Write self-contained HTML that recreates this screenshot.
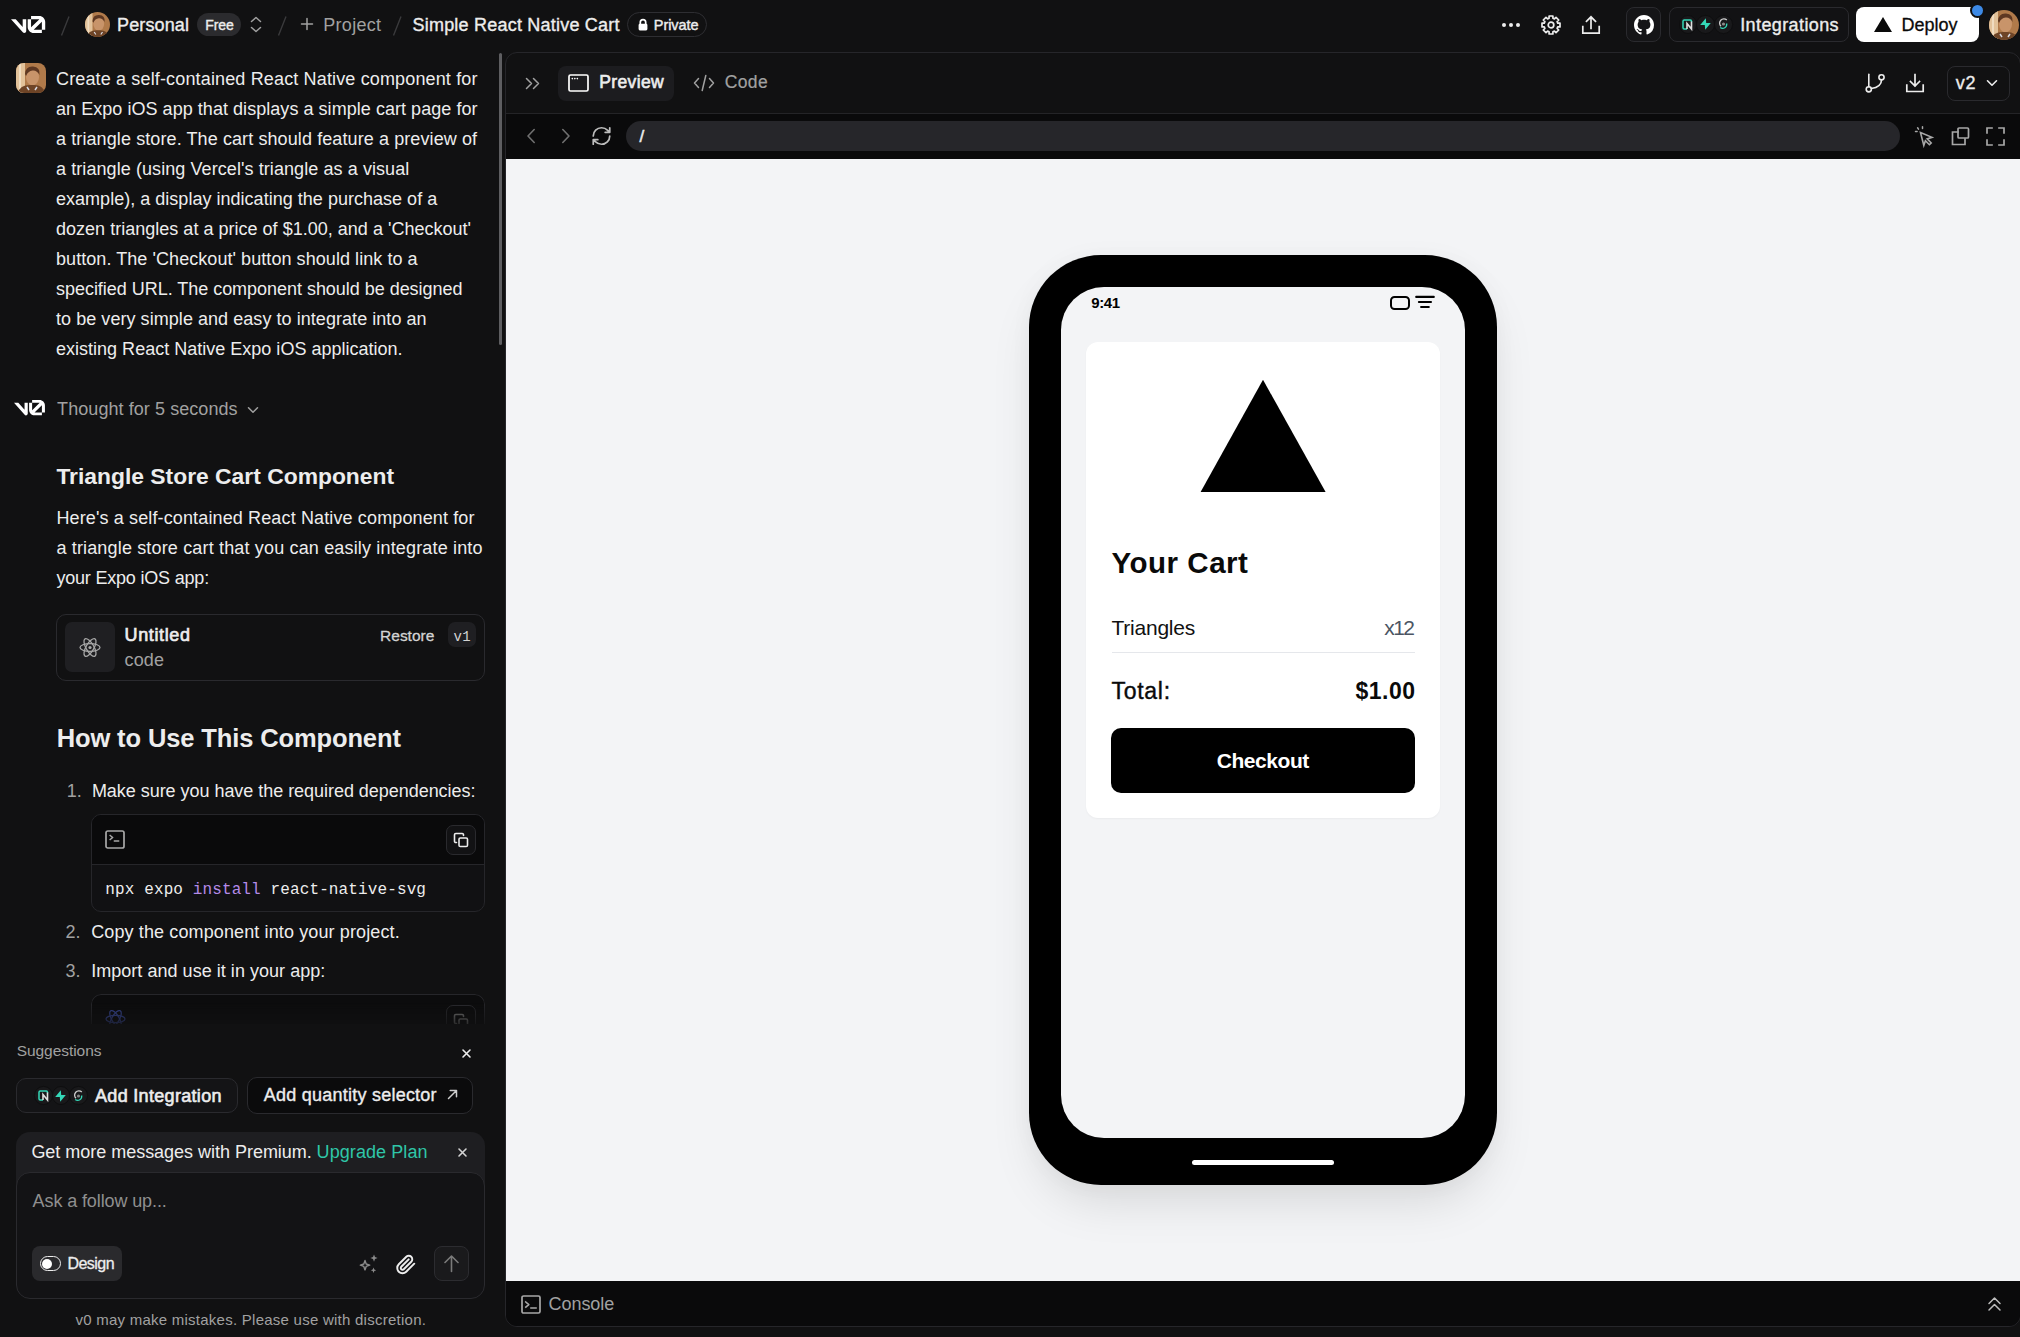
<!DOCTYPE html>
<html><head><meta charset="utf-8">
<style>
*{box-sizing:border-box;margin:0;padding:0}
html,body{width:2020px;height:1337px;overflow:hidden;background:#111112;font-family:"Liberation Sans",sans-serif;color:#ededed}
.a{position:absolute}
.t{position:absolute;white-space:pre;line-height:1;font-family:"Liberation Sans",sans-serif}
.t.m{font-family:"Liberation Mono",monospace}
svg{position:absolute;display:block;overflow:visible}
.ic{fill:none;stroke:currentColor;stroke-linecap:round;stroke-linejoin:round}
</style></head>
<body>
<!-- ============ TOP BAR ============ -->
<svg style="left:10.5px;top:16px;width:34.3px;height:17.15px" viewBox="0 0 40 20" fill="#fff"><path d="M23.3919 0H32.9188C36.7819 0 39.9136 3.13165 39.9136 6.99475V16.0805H36.0006V6.99475C36.0006 6.90167 35.9969 6.80925 35.9898 6.71766L26.4628 16.079C26.4949 16.08 26.5272 16.0805 26.5595 16.0805H36.0006V19.7762H26.5595C22.6964 19.7762 19.4788 16.6139 19.4788 12.7508V3.68923H23.3919V12.7508C23.3919 12.9253 23.4054 13.0977 23.4316 13.2668L33.1682 3.6995C33.0861 3.6927 33.003 3.68923 32.9188 3.68923H23.3919V0Z"/><path d="M13.7688 19.0956L0 3.68759H5.53933L13.6231 12.7337V3.68759H17.7535V17.5746C17.7535 19.6705 15.1654 20.6584 13.7688 19.0956Z"/></svg>
<svg style="left:0;top:0;width:10px;height:10px"><path d="M69 16.5L61.5 35.5M286 16.5L278.5 35.5M401 16.5L393.5 35.5" stroke="#3a3a3c" stroke-width="1.4"/></svg>
<div class="a" style="left:85px;top:12px;width:25px;height:25px;border-radius:50%;overflow:hidden"><svg viewBox="0 0 30 30" style="position:absolute;left:0;top:0;width:100%;height:100%" preserveAspectRatio="none"><rect width="30" height="30" fill="#b07a4a"/><rect x="0" y="0" width="9" height="30" fill="#e2c29a"/><rect x="3" y="0" width="2" height="30" fill="#f0dcc0"/><ellipse cx="16.5" cy="14" rx="6.5" ry="8.5" fill="#c8946a"/><path d="M9 11Q9.5 3 17 3.5Q24.5 4 23.5 12Q21 7 16.5 7.5Q12 8 10 13z" fill="#5e3822"/><path d="M2 30Q4 21 16 22Q27 21 29 30z" fill="#6e4426"/><path d="M11 24l2 3M21 24l-2 3" stroke="#d8d8e0" stroke-width="1.5"/></svg></div>
<div class="a" style="left:197px;top:13px;width:44px;height:23px;border-radius:12px;background:#2b2b2e"></div>
<svg class="ic" style="left:250px;top:16px;width:12px;height:17px;color:#a1a1a1" viewBox="0 0 12 17"><path d="M1.5 5.5L6 1.5l4.5 4M1.5 11.5L6 15.5l4.5-4" stroke-width="1.5"/></svg>
<svg class="ic" style="left:301px;top:18.3px;width:12px;height:12px;color:#a1a1a1" viewBox="0 0 12 12"><path d="M6 0.5v11M0.5 6h11" stroke-width="1.5"/></svg>
<div class="a" style="left:627px;top:12px;width:80px;height:25px;border-radius:13px;border:1px solid #2e2e32"></div>
<svg style="left:638px;top:19px;width:10px;height:11.5px" viewBox="0 0 10 11.5"><path d="M2.3 5V3.3a2.7 2.7 0 0 1 5.4 0V5" fill="none" stroke="#fff" stroke-width="1.7"/><rect x="0.6" y="4.8" width="8.8" height="6.6" rx="1.3" fill="#fff"/></svg>
<svg style="left:1500px;top:23px;width:22px;height:4px" viewBox="0 0 22 4" fill="#ededed"><circle cx="4" cy="2" r="2"/><circle cx="11" cy="2" r="2"/><circle cx="18" cy="2" r="2"/></svg>
<svg class="ic" style="left:1541px;top:15px;width:20px;height:20px;color:#ededed" viewBox="0 0 20 20"><path stroke-width="1.7" d="M8.07 3.27 L8.09 1.00 L11.91 1.00 L11.93 3.27 L13.39 3.88 L15.01 2.28 L17.72 4.99 L16.12 6.61 L16.73 8.07 L19.00 8.09 L19.00 11.91 L16.73 11.93 L16.12 13.39 L17.72 15.01 L15.01 17.72 L13.39 16.12 L11.93 16.73 L11.91 19.00 L8.09 19.00 L8.07 16.73 L6.61 16.12 L4.99 17.72 L2.28 15.01 L3.88 13.39 L3.27 11.93 L1.00 11.91 L1.00 8.09 L3.27 8.07 L3.88 6.61 L2.28 4.99 L4.99 2.28 L6.61 3.88Z"/><circle cx="10" cy="10" r="2.8" stroke-width="1.7"/></svg>
<svg class="ic" style="left:1581px;top:15px;width:20px;height:20px;color:#ededed" viewBox="0 0 20 20"><path stroke-width="1.7" d="M10 2v11.5M5.5 6.3L10 1.8l4.5 4.5M1.8 11.5v6.7h16.4v-6.7" stroke-linecap="square" stroke-linejoin="miter"/></svg>
<div class="a" style="left:1626px;top:7px;width:35px;height:35px;border-radius:8px;border:1px solid #2a2a2e;background:#151517"></div>
<svg style="left:1634px;top:15px;width:20px;height:20px" viewBox="0 0 16 16" fill="#fff"><path d="M8 0C3.58 0 0 3.58 0 8c0 3.54 2.29 6.530 5.47 7.59.4.07.55-.17.55-.38 0-.19-.01-.82-.01-1.49-2.01.37-2.530-.49-2.69-.94-.09-.23-.48-.94-.82-1.13-.28-.15-.68-.52-.01-.53.63-.01 1.08.58 1.23.82.72 1.21 1.87.87 2.33.66.07-.52.28-.87.51-1.07-1.78-.2-3.64-.89-3.640-3.95 0-.87.31-1.59.82-2.15-.08-.2-.36-1.02.08-2.12 0 0 .67-.21 2.2.82.64-.18 1.32-.27 2-.27.68 0 1.36.09 2 .27 1.53-1.04 2.2-.82 2.2-.82.44 1.1.16 1.92.08 2.12.51.56.82 1.27.82 2.15 0 3.07-1.87 3.75-3.65 3.95.29.25.54.73.54 1.48 0 1.07-.01 1.93-.01 2.2 0 .21.15.46.55.38A8.013 8.013 0 0016 8c0-4.42-3.58-8-8-8z"/></svg>
<div class="a" style="left:1669px;top:7px;width:180px;height:35px;border-radius:8px;border:1px solid #2a2a2e;background:#121214"></div>
<div class="a" style="left:1678.55px;top:15.05px;width:18.5px;height:18.5px;border-radius:50%;background:#19191b;border:1px solid #0e0e0f"></div><div class="a" style="left:1696.35px;top:15.05px;width:18.5px;height:18.5px;border-radius:50%;background:#19191b;border:1px solid #0e0e0f"></div><div class="a" style="left:1714.15px;top:15.05px;width:18.5px;height:18.5px;border-radius:50%;background:#19191b;border:1px solid #0e0e0f"></div><svg style="left:1682.30px;top:18.80px;width:11.00px;height:11.00px" viewBox="0 0 11 11"><path d="M9.5 3V2.2A1.2 1.2 0 0 0 8.3 1H2.2A1.2 1.2 0 0 0 1 2.2v6.6A1.2 1.2 0 0 0 2.2 10H5" fill="none" stroke="#34d8b8" stroke-width="1.5"/><path d="M5 10V4.5l4.5 5.5V2.5" fill="none" stroke="#e0e0e0" stroke-width="1.6"/></svg><svg style="left:1700.10px;top:18.30px;width:11.00px;height:12.00px" viewBox="0 0 11 12"><path d="M5.8 0.3L0.2 7h4.6L5.2 11.7 10.8 5H6.2z" fill="#34d8b8"/></svg><svg style="left:1717.90px;top:18.30px;width:11.00px;height:12.00px" viewBox="0 0 11 12"><path d="M8.8 2A4.2 4.2 0 1 0 3 8.3" fill="none" stroke="#d0d0d0" stroke-width="1.3"/><path d="M2.2 9.5A4 4 0 0 0 8.6 5.5" fill="none" stroke="#34d8b8" stroke-width="1.3"/><circle cx="5.5" cy="6" r="1.6" fill="#888"/></svg>
<div class="a" style="left:1856px;top:7px;width:123px;height:35px;border-radius:8px;background:#fff"></div>
<svg style="left:1874px;top:17px;width:18px;height:15px" viewBox="0 0 18 15" fill="#0a0a0a"><path d="M9 0L18 15H0z"/></svg>
<div class="a" style="left:1970px;top:2.5px;width:15px;height:15px;border-radius:50%;background:#3d8ae6;border:2px solid #111112"></div>
<div class="a" style="left:1989px;top:10px;width:30px;height:30px;border-radius:50%;overflow:hidden"><svg viewBox="0 0 30 30" style="position:absolute;left:0;top:0;width:100%;height:100%" preserveAspectRatio="none"><rect width="30" height="30" fill="#b07a4a"/><rect x="0" y="0" width="9" height="30" fill="#e2c29a"/><rect x="3" y="0" width="2" height="30" fill="#f0dcc0"/><ellipse cx="16.5" cy="14" rx="6.5" ry="8.5" fill="#c8946a"/><path d="M9 11Q9.5 3 17 3.5Q24.5 4 23.5 12Q21 7 16.5 7.5Q12 8 10 13z" fill="#5e3822"/><path d="M2 30Q4 21 16 22Q27 21 29 30z" fill="#6e4426"/><path d="M11 24l2 3M21 24l-2 3" stroke="#d8d8e0" stroke-width="1.5"/></svg></div>

<!-- ============ LEFT ============ -->
<div class="a" style="left:16px;top:63px;width:30px;height:30px;border-radius:8px;overflow:hidden"><svg viewBox="0 0 30 30" style="position:absolute;left:0;top:0;width:100%;height:100%" preserveAspectRatio="none"><rect width="30" height="30" fill="#b07a4a"/><rect x="0" y="0" width="9" height="30" fill="#e2c29a"/><rect x="3" y="0" width="2" height="30" fill="#f0dcc0"/><ellipse cx="16.5" cy="14" rx="6.5" ry="8.5" fill="#c8946a"/><path d="M9 11Q9.5 3 17 3.5Q24.5 4 23.5 12Q21 7 16.5 7.5Q12 8 10 13z" fill="#5e3822"/><path d="M2 30Q4 21 16 22Q27 21 29 30z" fill="#6e4426"/><path d="M11 24l2 3M21 24l-2 3" stroke="#d8d8e0" stroke-width="1.5"/></svg></div>
<div class="a" style="left:499px;top:53px;width:3px;height:292px;border-radius:1.5px;background:#5e5e61"></div>
<svg style="left:14px;top:399.8px;width:31px;height:15.5px" viewBox="0 0 40 20" fill="#fff"><path d="M23.3919 0H32.9188C36.7819 0 39.9136 3.13165 39.9136 6.99475V16.0805H36.0006V6.99475C36.0006 6.90167 35.9969 6.80925 35.9898 6.71766L26.4628 16.079C26.4949 16.08 26.5272 16.0805 26.5595 16.0805H36.0006V19.7762H26.5595C22.6964 19.7762 19.4788 16.6139 19.4788 12.7508V3.68923H23.3919V12.7508C23.3919 12.9253 23.4054 13.0977 23.4316 13.2668L33.1682 3.6995C33.0861 3.6927 33.003 3.68923 32.9188 3.68923H23.3919V0Z"/><path d="M13.7688 19.0956L0 3.68759H5.53933L13.6231 12.7337V3.68759H17.7535V17.5746C17.7535 19.6705 15.1654 20.6584 13.7688 19.0956Z"/></svg>
<svg class="ic" style="left:247px;top:406px;width:12px;height:8px;color:#a1a1a1" viewBox="0 0 12 8"><path d="M1.5 1.8L6 6.2l4.5-4.4" stroke-width="1.5"/></svg>
<!-- artifact card -->
<div class="a" style="left:56px;top:614px;width:429px;height:67px;border-radius:10px;border:1px solid #2a2a2e"></div>
<div class="a" style="left:65px;top:622px;width:50px;height:50px;border-radius:7px;background:#1f1f22"></div>
<svg class="ic" style="left:79px;top:637px;width:22px;height:21px;color:#a8a8a8" viewBox="0 0 22 21"><ellipse cx="11" cy="10.5" rx="10" ry="3.9" stroke-width="1.3"/><ellipse cx="11" cy="10.5" rx="10" ry="3.9" stroke-width="1.3" transform="rotate(60 11 10.5)"/><ellipse cx="11" cy="10.5" rx="10" ry="3.9" stroke-width="1.3" transform="rotate(120 11 10.5)"/><circle cx="11" cy="10.5" r="1.6" fill="#a8a8a8" stroke="none"/></svg>
<div class="a" style="left:448px;top:622px;width:28px;height:25px;border-radius:7px;background:#1f1f22"></div>
<!-- code block 1 -->
<div class="a" style="left:91px;top:814px;width:394px;height:98px;border-radius:10px;border:1px solid #26262a;background:#111113;overflow:hidden"><div class="a" style="left:0;top:0;width:100%;height:50px;background:#0a0a0b;border-bottom:1px solid #26262a"></div></div>
<svg class="ic" style="left:105px;top:830px;width:20px;height:19px;color:#a8a8a8" viewBox="0 0 20 19"><rect x="1" y="1" width="18" height="17" rx="1.8" stroke-width="1.7"/><path d="M5.2 5.5l2.5 2-2.5 2M9.5 11h4" stroke-width="1.5" stroke-linecap="square"/></svg>
<div class="a" style="left:446px;top:825px;width:30px;height:30px;border-radius:7px;border:1px solid #2a2a2e;background:#121214"></div>
<svg class="ic" style="left:453px;top:832px;width:16px;height:16px;color:#ededed" viewBox="0 0 16 16"><path d="M3.5 10.5H2.8A1.3 1.3 0 0 1 1.5 9.2V2.8A1.3 1.3 0 0 1 2.8 1.5h6.4a1.3 1.3 0 0 1 1.3 1.3v.7" stroke-width="1.6"/><rect x="6" y="6" width="8.5" height="8.5" rx="1.3" stroke-width="1.6"/></svg>
<!-- list numbers / texts via texts -->
<!-- code block 2 (faded) -->
<div class="a" style="left:91px;top:994px;width:394px;height:40px;border-radius:10px 10px 0 0;border:1px solid #26262a;border-bottom:none;background:#0c0c0d;overflow:hidden;-webkit-mask-image:linear-gradient(#000 20%,rgba(0,0,0,0.2) 80%,transparent)">
  <svg class="ic" style="left:13px;top:14px;width:21px;height:20px;color:#3a4a9a" viewBox="0 0 22 21"><ellipse cx="11" cy="10.5" rx="10" ry="3.9" stroke-width="1.3"/><ellipse cx="11" cy="10.5" rx="10" ry="3.9" stroke-width="1.3" transform="rotate(60 11 10.5)"/><ellipse cx="11" cy="10.5" rx="10" ry="3.9" stroke-width="1.3" transform="rotate(120 11 10.5)"/></svg>
  <div class="a" style="left:354px;top:10px;width:30px;height:30px;border-radius:7px;border:1px solid #2a2a2e"></div><svg class="ic" style="left:361px;top:18px;width:16px;height:16px;color:#777" viewBox="0 0 16 16"><path d="M3.5 10.5H2.8A1.3 1.3 0 0 1 1.5 9.2V2.8A1.3 1.3 0 0 1 2.8 1.5h6.4a1.3 1.3 0 0 1 1.3 1.3v.7" stroke-width="1.6"/><rect x="6" y="6" width="8.5" height="8.5" rx="1.3" stroke-width="1.6"/></svg>
</div>
<div class="a" style="left:0;top:1024px;width:498px;height:12px;background:#111112"></div>
<!-- suggestions -->
<svg class="ic" style="left:462px;top:1048.5px;width:9px;height:9px;color:#ededed" viewBox="0 0 9 9"><path d="M1 1l7 7M8 1L1 8" stroke-width="1.6"/></svg>
<div class="a" style="left:16px;top:1078px;width:222px;height:35px;border-radius:10px;border:1px solid #2a2a2e;background:#141416"></div>
<div class="a" style="left:34.05px;top:1086.25px;width:18.5px;height:18.5px;border-radius:50%;background:#19191b;border:1px solid #0e0e0f"></div><div class="a" style="left:51.55px;top:1086.25px;width:18.5px;height:18.5px;border-radius:50%;background:#19191b;border:1px solid #0e0e0f"></div><div class="a" style="left:69.05px;top:1086.25px;width:18.5px;height:18.5px;border-radius:50%;background:#19191b;border:1px solid #0e0e0f"></div><svg style="left:37.80px;top:1090.00px;width:11.00px;height:11.00px" viewBox="0 0 11 11"><path d="M9.5 3V2.2A1.2 1.2 0 0 0 8.3 1H2.2A1.2 1.2 0 0 0 1 2.2v6.6A1.2 1.2 0 0 0 2.2 10H5" fill="none" stroke="#34d8b8" stroke-width="1.5"/><path d="M5 10V4.5l4.5 5.5V2.5" fill="none" stroke="#e0e0e0" stroke-width="1.6"/></svg><svg style="left:55.30px;top:1089.50px;width:11.00px;height:12.00px" viewBox="0 0 11 12"><path d="M5.8 0.3L0.2 7h4.6L5.2 11.7 10.8 5H6.2z" fill="#34d8b8"/></svg><svg style="left:72.80px;top:1089.50px;width:11.00px;height:12.00px" viewBox="0 0 11 12"><path d="M8.8 2A4.2 4.2 0 1 0 3 8.3" fill="none" stroke="#d0d0d0" stroke-width="1.3"/><path d="M2.2 9.5A4 4 0 0 0 8.6 5.5" fill="none" stroke="#34d8b8" stroke-width="1.3"/><circle cx="5.5" cy="6" r="1.6" fill="#888"/></svg>
<div class="a" style="left:247px;top:1077px;width:226px;height:37px;border-radius:10px;border:1px solid #2a2a2e;background:#0b0b0c"></div>
<svg class="ic" style="left:447px;top:1089px;width:11px;height:11px;color:#cfcfcf" viewBox="0 0 11 11"><path d="M1.5 9.5l8-8M3.2 1.5h6.3v6.3" stroke-width="1.5"/></svg>
<!-- premium + input -->
<div class="a" style="left:16px;top:1132px;width:469px;height:120px;border-radius:14px;background:#1e1e21"></div>
<svg class="ic" style="left:457.5px;top:1148px;width:9px;height:9px;color:#d4d4d4" viewBox="0 0 9 9"><path d="M1 1l7 7M8 1L1 8" stroke-width="1.6"/></svg>
<div class="a" style="left:16px;top:1172px;width:469px;height:127px;border-radius:14px;border:1px solid #2a2a2e;background:#131315"></div>
<div class="a" style="left:32px;top:1246px;width:90px;height:35px;border-radius:8px;background:#2a2a2d"></div>
<div class="a" style="left:39.5px;top:1256px;width:21px;height:15px;border-radius:8px;border:1.5px solid #ededed"></div>
<div class="a" style="left:42px;top:1258.5px;width:10px;height:10px;border-radius:50%;background:#fff"></div>
<svg style="left:358px;top:1254px;width:22px;height:19px" viewBox="0 0 22 19" fill="#8a8a8a"><path d="M7 6.5 L8.2 10 L11.7 11.2 L8.2 12.4 L7 15.9 L5.8 12.4 L2.3 11.2 L5.8 10Z" fill="none" stroke="#8a8a8a" stroke-width="1.4" stroke-linejoin="round"/><path d="M16 0.5l1 2.6 2.6 1-2.6 1-1 2.6-1-2.6-2.6-1 2.6-1z"/><path d="M15.5 13.5l.8 1.9 1.9.8-1.9.8-.8 1.9-.8-1.9-1.9-.8 1.9-.8z"/></svg>
<svg class="ic" style="left:395px;top:1253.5px;width:22px;height:21px;color:#ededed" viewBox="0 0 24 24"><path stroke-width="2.2" d="M21.44 11.05l-9.19 9.19a6 6 0 0 1-8.49-8.49l8.57-8.57A4 4 0 1 1 18 8.84l-8.59 8.57a2 2 0 0 1-2.83-2.83l8.49-8.48"/></svg>
<div class="a" style="left:434px;top:1246px;width:35px;height:35px;border-radius:8px;border:1px solid #2c2c30;background:#1a1a1c"></div>
<svg class="ic" style="left:443px;top:1254px;width:17px;height:19px;color:#7a7a7a" viewBox="0 0 17 19"><path d="M8.5 17.5V2M2 8.5l6.5-6.5 6.5 6.5" stroke-width="1.6"/></svg>

<!-- ============ PANEL ============ -->
<div class="a" style="left:505px;top:52px;width:1516px;height:1275px;border-radius:12px;border:1px solid #26262a;background:#111112;overflow:hidden">
  <div class="a" style="left:0;top:60px;width:100%;height:46px;background:#0a0a0b;border-top:1px solid #242427"></div>
  <div class="a" style="left:0;top:106px;width:100%;height:1122px;background:#f3f4f6"></div>
  <div class="a" style="left:0;top:1228px;width:100%;height:46px;background:#0a0a0b"></div>
</div>
<svg class="ic" style="left:525px;top:76.5px;width:15px;height:13px;color:#a1a1a1" viewBox="0 0 15 13"><path d="M1.5 1.5l5 5-5 5M8.5 1.5l5 5-5 5" stroke-width="1.5"/></svg>
<div class="a" style="left:558px;top:66px;width:116px;height:35px;border-radius:8px;background:#1c1c1f"></div>
<svg class="ic" style="left:567.5px;top:74px;width:21px;height:18px;color:#ffffff" viewBox="0 0 21 18"><rect x="1" y="1" width="19" height="16" rx="1.5" stroke-width="1.7"/><path d="M4.3 4.6h.1M6.8 4.6h.1M9.3 4.6h.1" stroke-width="1.6"/></svg>
<svg class="ic" style="left:693px;top:74px;width:22px;height:18px;color:#a1a1a1" viewBox="0 0 22 18"><path d="M5.5 4.5L1.5 9l4 4.5M16.5 4.5l4 4.5-4 4.5M12.8 1.5L9.2 16.5" stroke-width="1.5"/></svg>
<svg class="ic" style="left:1864.5px;top:73px;width:20px;height:20px;color:#ededed" viewBox="0 0 20 20"><path d="M3.8 1.2v12.5" stroke-width="1.6"/><circle cx="3.8" cy="16.3" r="2.6" stroke-width="1.6"/><circle cx="16.5" cy="4.3" r="2.6" stroke-width="1.6"/><path d="M16.5 6.9c0 4.5-3.5 7.5-10.2 8.6" stroke-width="1.6"/></svg>
<svg class="ic" style="left:1905px;top:73px;width:20px;height:20px;color:#ededed" viewBox="0 0 20 20"><path d="M10 1.5v11.5M5.5 8.5l4.5 4.5 4.5-4.5M1.8 12v6.5h16.4V12" stroke-width="1.7" stroke-linecap="square" stroke-linejoin="miter"/></svg>
<div class="a" style="left:1947px;top:66px;width:63px;height:35px;border-radius:8px;border:1px solid #2a2a2e"></div>
<svg class="ic" style="left:1986px;top:79px;width:12px;height:8px;color:#ededed" viewBox="0 0 12 8"><path d="M1.5 1.8L6 6.2l4.5-4.4" stroke-width="1.6"/></svg>
<svg class="ic" style="left:526px;top:128px;width:10px;height:16px;color:#707070" viewBox="0 0 10 16"><path d="M8.2 1.5L2 8l6.2 6.5" stroke-width="1.6"/></svg>
<svg class="ic" style="left:561px;top:128px;width:10px;height:16px;color:#707070" viewBox="0 0 10 16"><path d="M1.8 1.5L8 8l-6.2 6.5" stroke-width="1.6"/></svg>
<svg class="ic" style="left:589.5px;top:125px;width:23px;height:22px;color:#bdbdbd" viewBox="0 0 24 24"><path stroke-width="1.9" d="M3 12a9 9 0 0 1 9-9 9.75 9.75 0 0 1 6.74 2.74L21 8M21 3v5h-5M21 12a9 9 0 0 1-9 9 9.75 9.75 0 0 1-6.740-2.74L3 16M8 16H3v5"/></svg>
<div class="a" style="left:626px;top:121px;width:1274px;height:30px;border-radius:15px;background:#26262a"></div>
<svg class="ic" style="left:1914px;top:125.5px;width:21px;height:20px;color:#a8a8a8" viewBox="0 0 21 20"><path d="M6.5 6.5l11.5 4.8-4.8 1.6 4 4-1.8 1.8-4-4-1.6 4.8z" stroke-width="1.6" stroke-linejoin="miter"/><path d="M1.5 5.5h1.6M3.6 1.8l.9 1.3M8.5 0.8v1.6" stroke-width="1.5"/></svg>
<svg class="ic" style="left:1950.5px;top:127px;width:19px;height:19px;color:#a8a8a8" viewBox="0 0 19 19"><path d="M7 5H1.5v12.5H14V12" stroke-width="1.7" stroke-linejoin="miter" stroke-linecap="square"/><rect x="7" y="1" width="10.5" height="10" rx="1" stroke-width="1.7"/></svg>
<svg class="ic" style="left:1985.5px;top:127px;width:19px;height:19px;color:#a8a8a8" viewBox="0 0 19 19"><path d="M1 6V1h5M13 1h5v5M18 13v5h-5M6 18H1v-5" stroke-width="1.7" stroke-linecap="square" stroke-linejoin="miter"/></svg>
<svg class="ic" style="left:521px;top:1294.5px;width:20px;height:19px;color:#a8a8a8" viewBox="0 0 20 19"><rect x="1" y="1" width="18" height="17" rx="1.6" stroke-width="1.7"/><path d="M4.8 7l3 2.6-3 2.6M10 13h5" stroke-width="1.6" stroke-linecap="square"/></svg>
<svg class="ic" style="left:1987.5px;top:1297px;width:13px;height:14px;color:#bdbdbd" viewBox="0 0 13 14"><path d="M1 6.5l5.5-5.5 5.5 5.5M1 13l5.5-5.5 5.5 5.5" stroke-width="1.5"/></svg>

<!-- ============ PHONE ============ -->
<div class="a" style="left:1029px;top:255px;width:468px;height:930px;border-radius:72px;background:#000;box-shadow:0 25px 50px -12px rgba(0,0,0,0.13),0 0 24px rgba(0,0,0,0.03)"></div>
<div class="a" style="left:1061px;top:286.5px;width:404px;height:851.5px;border-radius:43px;background:#f3f4f6"></div>
<div class="a" style="left:1390px;top:296px;width:20px;height:14px;border-radius:4.5px;border:2px solid #000"></div>
<svg style="left:1414px;top:295px;width:22px;height:14px" viewBox="0 0 22 14"><path d="M2.2 1.9h17.6M4.9 7h12.1M7.1 12h7.7" stroke="#000" stroke-width="2.1" stroke-linecap="round"/></svg>
<div class="a" style="left:1086px;top:341.5px;width:354px;height:476.5px;border-radius:12px;background:#fff;box-shadow:0 1px 2px rgba(0,0,0,0.04)"></div>
<svg style="left:1200px;top:379px;width:126px;height:114px" viewBox="0 0 126 114" fill="#000"><path d="M63 0.8L125.6 113H0.6z"/></svg>
<div class="a" style="left:1111.5px;top:651.5px;width:303.5px;height:1px;background:#e5e7eb"></div>
<div class="a" style="left:1111px;top:728px;width:304px;height:65px;border-radius:10px;background:#000"></div>
<div class="a" style="left:1192px;top:1159.7px;width:142px;height:5.3px;border-radius:3px;background:#fff"></div>

<div class="t" style="left:117.00px;top:15.66px;font-size:18px;color:#ededed;font-weight:400;letter-spacing:0.136px;-webkit-text-stroke:0.35px #ededed">Personal</div>
<div class="t" style="left:205.30px;top:17.95px;font-size:14px;color:#ededed;font-weight:400;letter-spacing:-0.132px;-webkit-text-stroke:0.35px #ededed">Free</div>
<div class="t" style="left:323.30px;top:15.86px;font-size:18px;color:#a1a1a1;font-weight:400;letter-spacing:0.278px">Project</div>
<div class="t" style="left:412.50px;top:15.86px;font-size:18px;color:#ededed;font-weight:400;letter-spacing:0.214px;-webkit-text-stroke:0.35px #ededed">Simple React Native Cart</div>
<div class="t" style="left:653.80px;top:17.98px;font-size:14.5px;color:#ededed;font-weight:400;letter-spacing:-0.057px;-webkit-text-stroke:0.4px #ededed">Private</div>
<div class="t" style="left:1740.20px;top:16.36px;font-size:18px;color:#ededed;font-weight:400;letter-spacing:0.394px;-webkit-text-stroke:0.35px #ededed">Integrations</div>
<div class="t" style="left:1901.40px;top:16.06px;font-size:18px;color:#0a0a0a;font-weight:400;letter-spacing:0.034px;-webkit-text-stroke:0.3px #0a0a0a">Deploy</div>
<div class="t" style="left:56.00px;top:69.96px;font-size:18px;color:#ededed;font-weight:400;letter-spacing:0.148px">Create a self-contained React Native component for</div>
<div class="t" style="left:56.00px;top:99.96px;font-size:18px;color:#ededed;font-weight:400;letter-spacing:0.044px">an Expo iOS app that displays a simple cart page for</div>
<div class="t" style="left:56.00px;top:129.96px;font-size:18px;color:#ededed;font-weight:400;letter-spacing:0.098px">a triangle store. The cart should feature a preview of</div>
<div class="t" style="left:56.00px;top:159.96px;font-size:18px;color:#ededed;font-weight:400;letter-spacing:0.080px">a triangle (using Vercel's triangle as a visual</div>
<div class="t" style="left:56.00px;top:189.96px;font-size:18px;color:#ededed;font-weight:400;letter-spacing:0.021px">example), a display indicating the purchase of a</div>
<div class="t" style="left:56.00px;top:219.96px;font-size:18px;color:#ededed;font-weight:400;letter-spacing:0.017px">dozen triangles at a price of $1.00, and a 'Checkout'</div>
<div class="t" style="left:56.00px;top:249.96px;font-size:18px;color:#ededed;font-weight:400;letter-spacing:0.063px">button. The 'Checkout' button should link to a</div>
<div class="t" style="left:56.00px;top:279.96px;font-size:18px;color:#ededed;font-weight:400;letter-spacing:-0.031px">specified URL. The component should be designed</div>
<div class="t" style="left:56.00px;top:309.96px;font-size:18px;color:#ededed;font-weight:400;letter-spacing:0.052px">to be very simple and easy to integrate into an</div>
<div class="t" style="left:56.00px;top:339.96px;font-size:18px;color:#ededed;font-weight:400;letter-spacing:0.010px">existing React Native Expo iOS application.</div>
<div class="t" style="left:57.10px;top:399.76px;font-size:18px;color:#a1a1a1;font-weight:400;letter-spacing:0.069px">Thought for 5 seconds</div>
<div class="t" style="left:56.40px;top:465.26px;font-size:22.85px;color:#ededed;font-weight:700;letter-spacing:0.003px">Triangle Store Cart Component</div>
<div class="t" style="left:56.40px;top:509.26px;font-size:18px;color:#ededed;font-weight:400;letter-spacing:0.132px">Here's a self-contained React Native component for</div>
<div class="t" style="left:56.40px;top:539.26px;font-size:18px;color:#ededed;font-weight:400;letter-spacing:0.161px">a triangle store cart that you can easily integrate into</div>
<div class="t" style="left:56.40px;top:569.26px;font-size:18px;color:#ededed;font-weight:400;letter-spacing:-0.194px">your Expo iOS app:</div>
<div class="t" style="left:124.60px;top:625.76px;font-size:18px;color:#ededed;font-weight:400;letter-spacing:0.610px;-webkit-text-stroke:0.65px #ededed">Untitled</div>
<div class="t" style="left:124.60px;top:650.56px;font-size:18px;color:#a1a1a1;font-weight:400;letter-spacing:0.118px">code</div>
<div class="t" style="left:380.10px;top:627.88px;font-size:15.5px;color:#d4d4d4;font-weight:400;letter-spacing:-0.014px;-webkit-text-stroke:0.3px #d4d4d4">Restore</div>
<div class="t m" style="left:453.60px;top:630.27px;font-size:14px;color:#d4d4d4;font-weight:400;letter-spacing:0.188px">v1</div>
<div class="t" style="left:56.70px;top:725.71px;font-size:25.5px;color:#ededed;font-weight:700;letter-spacing:-0.120px">How to Use This Component</div>
<div class="t" style="left:66.70px;top:781.76px;font-size:18px;color:#a1a1a1;font-weight:400;letter-spacing:0.000px">1.</div>
<div class="t" style="left:91.90px;top:781.76px;font-size:18px;color:#ededed;font-weight:400;letter-spacing:-0.038px">Make sure you have the required dependencies:</div>
<div class="t m" style="left:105.30px;top:882.04px;font-size:16px;color:#ededed;font-weight:400;letter-spacing:0.120px">npx expo</div>
<div class="t m" style="left:192.78px;top:882.04px;font-size:16px;color:#b48ae8;font-weight:400;letter-spacing:0.120px">install</div>
<div class="t m" style="left:270.54px;top:882.04px;font-size:16px;color:#ededed;font-weight:400;letter-spacing:0.120px">react-native-svg</div>
<div class="t" style="left:65.60px;top:922.76px;font-size:18px;color:#a1a1a1;font-weight:400;letter-spacing:0.000px">2.</div>
<div class="t" style="left:91.20px;top:922.76px;font-size:18px;color:#ededed;font-weight:400;letter-spacing:0.120px">Copy the component into your project.</div>
<div class="t" style="left:65.60px;top:961.66px;font-size:18px;color:#a1a1a1;font-weight:400;letter-spacing:0.000px">3.</div>
<div class="t" style="left:91.20px;top:961.66px;font-size:18px;color:#ededed;font-weight:400;letter-spacing:0.033px">Import and use it in your app:</div>
<div class="t" style="left:16.70px;top:1043.28px;font-size:15.5px;color:#a1a1a1;font-weight:400;letter-spacing:-0.051px">Suggestions</div>
<div class="t" style="left:95.00px;top:1087.46px;font-size:18px;color:#ededed;font-weight:400;letter-spacing:0.315px;-webkit-text-stroke:0.6px #ededed">Add Integration</div>
<div class="t" style="left:263.80px;top:1086.26px;font-size:18px;color:#ededed;font-weight:400;letter-spacing:0.235px;-webkit-text-stroke:0.35px #ededed">Add quantity selector</div>
<div class="t" style="left:31.40px;top:1143.06px;font-size:18px;color:#ededed;font-weight:400;letter-spacing:-0.023px">Get more messages with Premium.</div>
<div class="t" style="left:316.60px;top:1143.06px;font-size:18px;color:#2fc6a8;font-weight:400;letter-spacing:0.075px">Upgrade Plan</div>
<div class="t" style="left:32.60px;top:1191.76px;font-size:18px;color:#8f8f8f;font-weight:400;letter-spacing:-0.110px">Ask a follow up...</div>
<div class="t" style="left:67.50px;top:1255.66px;font-size:16px;color:#ededed;font-weight:400;letter-spacing:-0.542px;-webkit-text-stroke:0.3px #ededed">Design</div>
<div class="t" style="left:75.40px;top:1311.90px;font-size:15px;color:#a1a1a1;font-weight:400;letter-spacing:0.251px">v0 may make mistakes. Please use with discretion.</div>
<div class="t" style="left:599.30px;top:74.39px;font-size:17.5px;color:#ededed;font-weight:400;letter-spacing:0.358px;-webkit-text-stroke:0.6px #ededed">Preview</div>
<div class="t" style="left:724.70px;top:74.39px;font-size:17.5px;color:#a1a1a1;font-weight:400;letter-spacing:0.385px;-webkit-text-stroke:0.2px #a1a1a1">Code</div>
<div class="t" style="left:1955.80px;top:73.56px;font-size:18px;color:#ededed;font-weight:400;letter-spacing:0.600px;-webkit-text-stroke:0.35px #ededed">v2</div>
<div class="t" style="left:639.50px;top:128.11px;font-size:17px;color:#ededed;font-weight:400;letter-spacing:0.000px;-webkit-text-stroke:0.5px #ededed">/</div>
<div class="t" style="left:548.60px;top:1294.86px;font-size:18px;color:#a1a1a1;font-weight:400;letter-spacing:-0.074px">Console</div>
<div class="t" style="left:1091.20px;top:295.30px;font-size:15px;color:#000;font-weight:700;letter-spacing:-0.377px">9:41</div>
<div class="t" style="left:1111.50px;top:548.13px;font-size:29.5px;color:#0a0a0a;font-weight:700;letter-spacing:0.523px">Your Cart</div>
<div class="t" style="left:1111.50px;top:616.62px;font-size:21px;color:#111;font-weight:400;letter-spacing:-0.237px">Triangles</div>
<div class="t" style="left:1384.30px;top:616.62px;font-size:21px;color:#4b5563;font-weight:400;letter-spacing:-1.580px">x12</div>
<div class="t" style="left:1111.50px;top:679.53px;font-size:23px;color:#0a0a0a;font-weight:400;letter-spacing:0.723px;-webkit-text-stroke:0.4px #0a0a0a">Total:</div>
<div class="t" style="left:1355.60px;top:679.53px;font-size:23px;color:#0a0a0a;font-weight:700;letter-spacing:0.459px">$1.00</div>
<div class="t" style="left:1216.70px;top:750.42px;font-size:21px;color:#fff;font-weight:700;letter-spacing:-0.441px">Checkout</div>
</body></html>
